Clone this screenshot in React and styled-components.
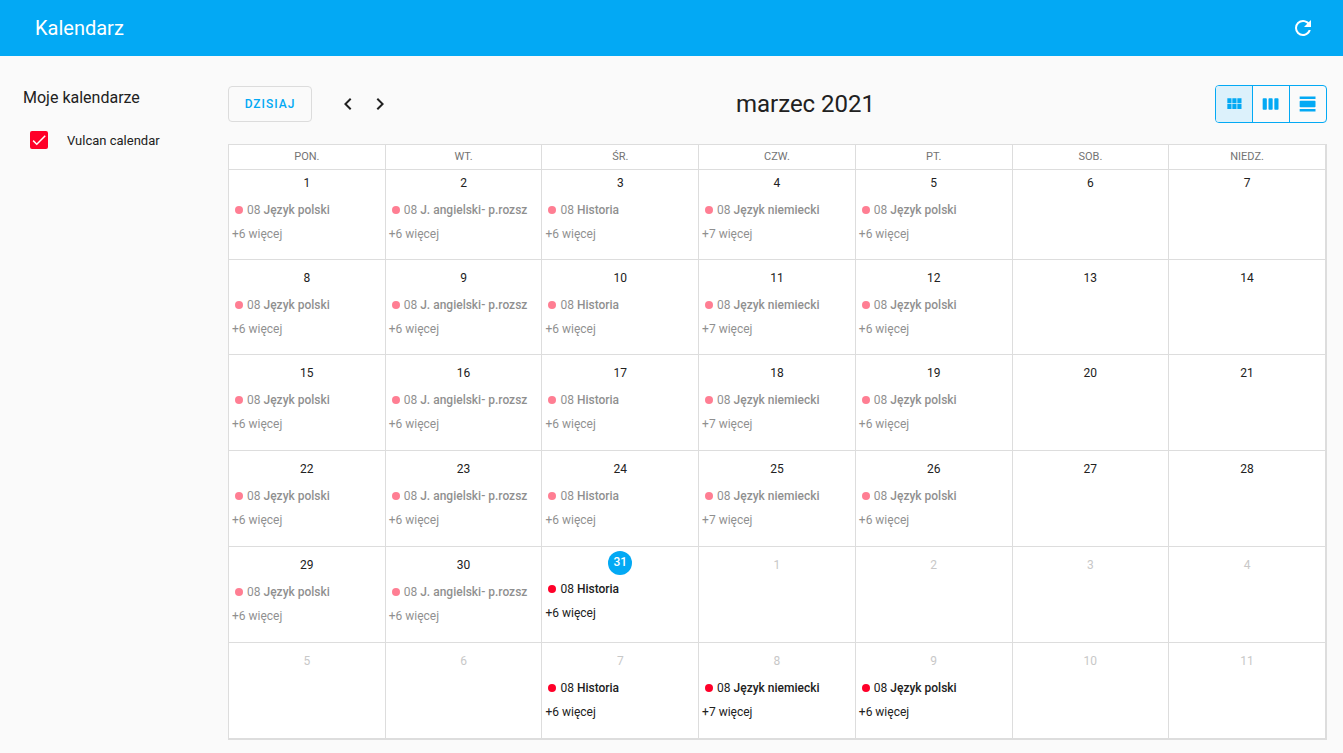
import React from "react";
import styled, { createGlobalStyle } from "styled-components";

const GlobalStyle = createGlobalStyle`
  *, *::before, *::after { box-sizing: border-box; }
  body {
    margin: 0;
    background: #fafafa;
    color: #212121;
    font-family: Roboto, "Liberation Sans", sans-serif;
    font-size: 12px;
  }
  button { font-family: inherit; padding: 0; cursor: pointer; }
`;

const Header = styled.header`
  display: flex;
  align-items: center;
  justify-content: space-between;
  height: 56px;
  padding: 0 16px 0 35px;
  background: #03a9f4;
  color: #fff;
`;

const AppTitle = styled.h1`
  margin: 0;
  font-size: 20px;
  font-weight: 400;
  line-height: 24px;
`;

const IconButton = styled.button`
  display: flex;
  align-items: center;
  justify-content: center;
  width: ${(p) => p.$size}px;
  height: ${(p) => p.$size}px;
  border: 0;
  background: none;
  color: inherit;
`;

const Icon = styled.svg`
  display: block;
  flex: none;
  width: ${(p) => p.$size || 24}px;
  height: ${(p) => p.$size || 24}px;
  fill: currentColor;
`;

const Content = styled.div`
  display: flex;
  padding: 29px 16px 13px 0;
`;

const Sidebar = styled.aside`
  flex: none;
  width: 228px;
  padding-left: 23px;
`;

const SidebarTitle = styled.h2`
  margin: 0 0 17px;
  font-size: 16px;
  font-weight: 400;
  line-height: 26px;
`;

const CalendarOption = styled.label`
  display: flex;
  align-items: center;
  gap: 19px;
  height: 24px;
  padding-left: 7px;
  font-size: 13px;
`;

const CheckWrap = styled.span`
  display: grid;
  width: 18px;
  height: 18px;
  color: #fff;
  > * { grid-area: 1 / 1; }
  svg { pointer-events: none; }
`;

const Checkbox = styled.input`
  appearance: none;
  margin: 0;
  border: 2px solid #ff0029;
  border-radius: 2px;
  &:checked { background: #ff0029; }
`;

const Main = styled.main`
  flex: 1;
  min-width: 0;
`;

const Toolbar = styled.div`
  display: flex;
  align-items: center;
  justify-content: space-between;
  height: 38px;
  margin-bottom: 21px;
`;

const Navigation = styled.div`
  display: flex;
  align-items: center;
`;

const TodayButton = styled.button`
  width: 84px;
  height: 36px;
  margin-right: 20px;
  border: 1px solid #dcdcdc;
  border-radius: 4px;
  background: none;
  color: #03a9f4;
  font-size: 12px;
  font-weight: 500;
  letter-spacing: 1px;
  text-transform: uppercase;
`;

const MonthTitle = styled.h2`
  margin: 0;
  font-size: 24px;
  font-weight: 400;
  line-height: 32px;
`;

const ViewToggle = styled.div`
  display: flex;
  height: 38px;
  border: 1px solid #03a9f4;
  border-radius: 4px;
  overflow: hidden;
`;

const ViewButton = styled.button`
  display: flex;
  align-items: center;
  justify-content: center;
  width: 37px;
  border: 0;
  background: ${(p) => (p.$active ? "#dcf1fb" : "transparent")};
  color: #03a9f4;
  & + & { border-left: 1px solid #03a9f4; }
  &:first-child { width: 36px; }
`;

const Month = styled.table`
  width: 100%;
  table-layout: fixed;
  border: 1px solid #ddd;
  border-spacing: 0;
  background: #fff;
`;

const WeekdayCell = styled.th`
  height: 25px;
  padding: 0 0 2px;
  border-right: 1px solid #ddd;
  border-bottom: 1px solid #ddd;
  color: #737373;
  font-size: 11px;
  font-weight: 400;
  text-transform: uppercase;
`;

const Week = styled.tr`
  height: ${(p) => p.$height}px;
`;

const DayCell = styled.td`
  padding: ${(p) => p.$top}px 3px 0;
  border-right: 1px solid #ddd;
  border-bottom: 1px solid #ddd;
  vertical-align: top;
`;

const DayNumber = styled.div`
  margin-bottom: 2px;
  line-height: 26px;
  text-align: center;
  color: ${(p) => (p.$outside ? "#c8c8c8" : "#212121")};
`;

const TodayNumber = styled.div`
  width: 24px;
  height: 24px;
  margin: 0 auto 2px;
  border-radius: 50%;
  background: #03a9f4;
  color: #fff;
  font-weight: 500;
  line-height: 22px;
  text-align: center;
`;

const Event = styled.div`
  display: flex;
  align-items: center;
  height: 24px;
  padding-left: 3px;
  white-space: nowrap;
  opacity: ${(p) => (p.$past ? 0.5 : 1)};
`;

const Dot = styled.span`
  width: 8px;
  height: 8px;
  margin-right: 4px;
  border-radius: 50%;
  background: #ff0029;
`;

const EventTitle = styled.span`
  margin-left: 3px;
  font-weight: 500;
`;

const MoreLink = styled.a`
  display: block;
  line-height: 24px;
  color: inherit;
  text-decoration: none;
  opacity: ${(p) => (p.$past ? 0.5 : 1)};
`;

const WEEKDAYS = ["pon.", "wt.", "śr.", "czw.", "pt.", "sob.", "niedz."];
const LESSONS = ["Język polski", "J. angielski- p.rozsz", "Historia", "Język niemiecki", "Język polski"];
const TODAY = 30;
const DAYS_IN_MONTH = 31;
const HIDDEN = [31, 32, 35, 36];
const WEEK_HEIGHTS = [90, 95, 96, 96, 96, 96];

const VIEWS = [
  { label: "Miesiąc", path: "M16,5V11H21V5M10,11H15V5H10M16,18H21V12H16M10,18H15V12H10M4,18H9V12H4M4,11H9V5H4V11Z" },
  { label: "Tydzień", path: "M13,5H10A1,1 0 0,0 9,6V18A1,1 0 0,0 10,19H13A1,1 0 0,0 14,18V6A1,1 0 0,0 13,5M20,5H17A1,1 0 0,0 16,6V18A1,1 0 0,0 17,19H20A1,1 0 0,0 21,18V6A1,1 0 0,0 20,5M6,5H3A1,1 0 0,0 2,6V18A1,1 0 0,0 3,19H6A1,1 0 0,0 7,18V6A1,1 0 0,0 6,5Z" },
  { label: "Dzień", path: "M2,3V6H21V3M20,8H3A1,1 0 0,0 2,9V15A1,1 0 0,0 3,16H20A1,1 0 0,0 21,15V9A1,1 0 0,0 20,8M2,21H21V18H2V21Z" },
];

function Glyph({ path, size }) {
  return (
    <Icon viewBox="0 0 24 24" $size={size} aria-hidden="true">
      <path d={path} />
    </Icon>
  );
}

function Day({ index }) {
  const column = index % 7;
  const today = index === TODAY;
  const past = index < TODAY;
  const outside = index >= DAYS_IN_MONTH;
  const number = outside ? index - DAYS_IN_MONTH + 1 : index + 1;
  const lesson = HIDDEN.includes(index) ? null : LESSONS[column];
  const top = today ? 4 : index < 7 ? 0 : 5;
  return (
    <DayCell $top={top}>
      {today ? <TodayNumber>{number}</TodayNumber> : <DayNumber $outside={outside}>{number}</DayNumber>}
      {lesson && (
        <>
          <Event $past={past}>
            <Dot />
            <span>08</span>
            <EventTitle>{lesson}</EventTitle>
          </Event>
          <MoreLink href="#" $past={past}>+{column === 3 ? 7 : 6} więcej</MoreLink>
        </>
      )}
    </DayCell>
  );
}

export default function App() {
  return (
    <>
      <GlobalStyle />
      <Header>
        <AppTitle>Kalendarz</AppTitle>
        <IconButton $size={48} aria-label="Odśwież">
          <Glyph path="M17.65,6.35C16.2,4.9 14.21,4 12,4A8,8 0 0,0 4,12A8,8 0 0,0 12,20C15.73,20 18.84,17.45 19.73,14H17.65C16.83,16.33 14.61,18 12,18A6,6 0 0,1 6,12A6,6 0 0,1 12,6C13.66,6 15.14,6.69 16.22,7.78L13,11H20V4L17.65,6.35Z" />
        </IconButton>
      </Header>
      <Content>
        <Sidebar>
          <SidebarTitle>Moje kalendarze</SidebarTitle>
          <CalendarOption>
            <CheckWrap>
              <Checkbox type="checkbox" defaultChecked />
              <Glyph size={18} path="M21,7L9,19L3.5,13.5L4.91,12.09L9,16.17L19.59,5.59L21,7Z" />
            </CheckWrap>
            Vulcan calendar
          </CalendarOption>
        </Sidebar>
        <Main>
          <Toolbar>
            <Navigation>
              <TodayButton>Dzisiaj</TodayButton>
              <IconButton $size={32} aria-label="Poprzedni">
                <Glyph path="M15.41,16.58L10.83,12L15.41,7.41L14,6L8,12L14,18L15.41,16.58Z" />
              </IconButton>
              <IconButton $size={32} aria-label="Następny">
                <Glyph path="M8.59,16.58L13.17,12L8.59,7.41L10,6L16,12L10,18L8.59,16.58Z" />
              </IconButton>
            </Navigation>
            <MonthTitle>marzec 2021</MonthTitle>
            <ViewToggle>
              {VIEWS.map((view, i) => (
                <ViewButton key={view.label} $active={i === 0} aria-label={view.label} aria-pressed={i === 0}>
                  <Glyph path={view.path} size={20} />
                </ViewButton>
              ))}
            </ViewToggle>
          </Toolbar>
          <Month>
            <thead>
              <tr>
                {WEEKDAYS.map((day) => (
                  <WeekdayCell key={day} scope="col">{day}</WeekdayCell>
                ))}
              </tr>
            </thead>
            <tbody>
              {WEEK_HEIGHTS.map((height, week) => (
                <Week key={week} $height={height}>
                  {WEEKDAYS.map((day, column) => (
                    <Day key={day} index={week * 7 + column} />
                  ))}
                </Week>
              ))}
            </tbody>
          </Month>
        </Main>
      </Content>
    </>
  );
}
